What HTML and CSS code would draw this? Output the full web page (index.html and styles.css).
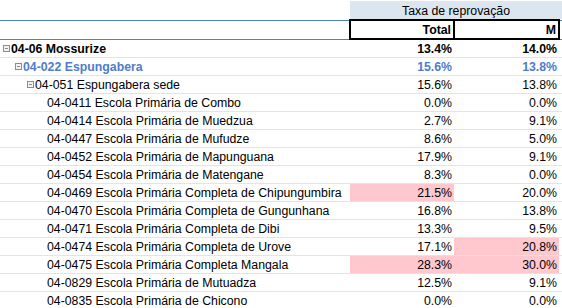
FILE: index.html
```html
<!DOCTYPE html>
<html>
<head>
<meta charset="utf-8">
<link rel="stylesheet" href="styles.css">
</head>
<body>
<table class="pivot">
  <colgroup><col class="c-label"><col class="c-total"><col class="c-m"><col class="c-pad"></colgroup>
  <tr class="h1"><td class="blank"></td><td class="title" colspan="3">Taxa de reprovação</td></tr>
  <tr class="h2"><td class="blank"></td><td class="hd first">Total</td><td class="hd last">M</td><td class="pad"></td></tr>
  <tr class="r lvl0"><td><span class="tog"></span>04-06 Mossurize</td><td class="n">13.4%</td><td class="n">14.0%</td><td></td></tr>
  <tr class="r lvl1"><td><span class="tog"></span>04-022 Espungabera</td><td class="n">15.6%</td><td class="n">13.8%</td><td></td></tr>
  <tr class="r lvl2"><td><span class="tog"></span>04-051 Espungabera sede</td><td class="n">15.6%</td><td class="n">13.8%</td><td></td></tr>
  <tr class="r lvl3"><td>04-0411 Escola Primária de Combo</td><td class="n">0.0%</td><td class="n">0.0%</td><td></td></tr>
  <tr class="r lvl3"><td>04-0414 Escola Primária de Muedzua</td><td class="n">2.7%</td><td class="n">9.1%</td><td></td></tr>
  <tr class="r lvl3"><td>04-0447 Escola Primária de Mufudze</td><td class="n">8.6%</td><td class="n">5.0%</td><td></td></tr>
  <tr class="r lvl3"><td>04-0452 Escola Primária de Mapunguana</td><td class="n">17.9%</td><td class="n">9.1%</td><td></td></tr>
  <tr class="r lvl3"><td>04-0454 Escola Primária de Matengane</td><td class="n">8.3%</td><td class="n">0.0%</td><td></td></tr>
  <tr class="r lvl3"><td>04-0469 Escola Primária Completa de Chipungumbira</td><td class="n hot">21.5%</td><td class="n">20.0%</td><td></td></tr>
  <tr class="r lvl3"><td>04-0470 Escola Primária Completa de Gungunhana</td><td class="n">16.8%</td><td class="n">13.8%</td><td></td></tr>
  <tr class="r lvl3"><td>04-0471 Escola Primária Completa de Dibi</td><td class="n">13.3%</td><td class="n">9.5%</td><td></td></tr>
  <tr class="r lvl3"><td>04-0474 Escola Primária Completa de Urove</td><td class="n">17.1%</td><td class="n hot">20.8%</td><td></td></tr>
  <tr class="r lvl3"><td>04-0475 Escola Primária Completa Mangala</td><td class="n hot">28.3%</td><td class="n hot">30.0%</td><td></td></tr>
  <tr class="r lvl3"><td>04-0829 Escola Primária de Mutuadza</td><td class="n">12.5%</td><td class="n">9.1%</td><td></td></tr>
  <tr class="r lvl3"><td>04-0835 Escola Primária de Chicono</td><td class="n">0.0%</td><td class="n">0.0%</td><td></td></tr>
</table>
</body>
</html>
```
FILE: styles.css
```css
html, body {
  margin: 0;
  padding: 0;
  background: #ffffff;
}
.pivot {
  border-collapse: collapse;
  table-layout: fixed;
  width: 562px;
  font-family: "Liberation Sans", Arial, sans-serif;
  font-size: 12.3px;
  color: #000000;
}
.c-label { width: 350px; }
.c-total { width: 104px; }
.c-m { width: 105px; }
.c-pad { width: 3px; }
.pivot td {
  padding: 1px 2px 0 2px;
  white-space: nowrap;
  overflow: hidden;
  line-height: 16px;
  height: 16px;
}
.h1 td {
  height: 17px;
  border-bottom: 1px solid #4f81bd;
}
.h1 .title {
  background: #dce6f1;
  text-align: center;
  border-top: 1px solid #ffffff;
}
.h1 .blank { border-bottom: 1px solid #4f81bd; }
.h2 td {
  border-bottom: 1px solid #4f81bd;
}
.h2 .hd {
  text-align: right;
  font-weight: bold;
  border-top: 2px solid #000000;
  border-bottom: 2px solid #000000;
}
.h2 .first { border-left: 2px solid #000000; border-right: 2px solid #000000; }
.h2 .last { border-right: 2px solid #000000; }
.h2 .pad { border-bottom: 1px solid #4f81bd; }
.r td {
  border-bottom: 1px solid #dce6f1;
}
.r .n { text-align: right; }
.r .hot { background: #ffc7ce; }
.lvl0 td { font-weight: bold; }
.lvl0 td:first-child { padding-left: 3px; }
.lvl1 td { font-weight: bold; color: #4f7ccc; }
.lvl1 td:first-child { padding-left: 15px; }
.lvl2 td:first-child { padding-left: 27px; }
.lvl3 td:first-child { padding-left: 47px; }
.tog {
  display: inline-block;
  width: 5px;
  height: 5px;
  border: 1px solid #8c8c8c;
  background: linear-gradient(#8c8c8c, #8c8c8c) center / 3px 1px no-repeat, #f2f2f2;
  margin-right: 1px;
  vertical-align: 1px;
}
```
